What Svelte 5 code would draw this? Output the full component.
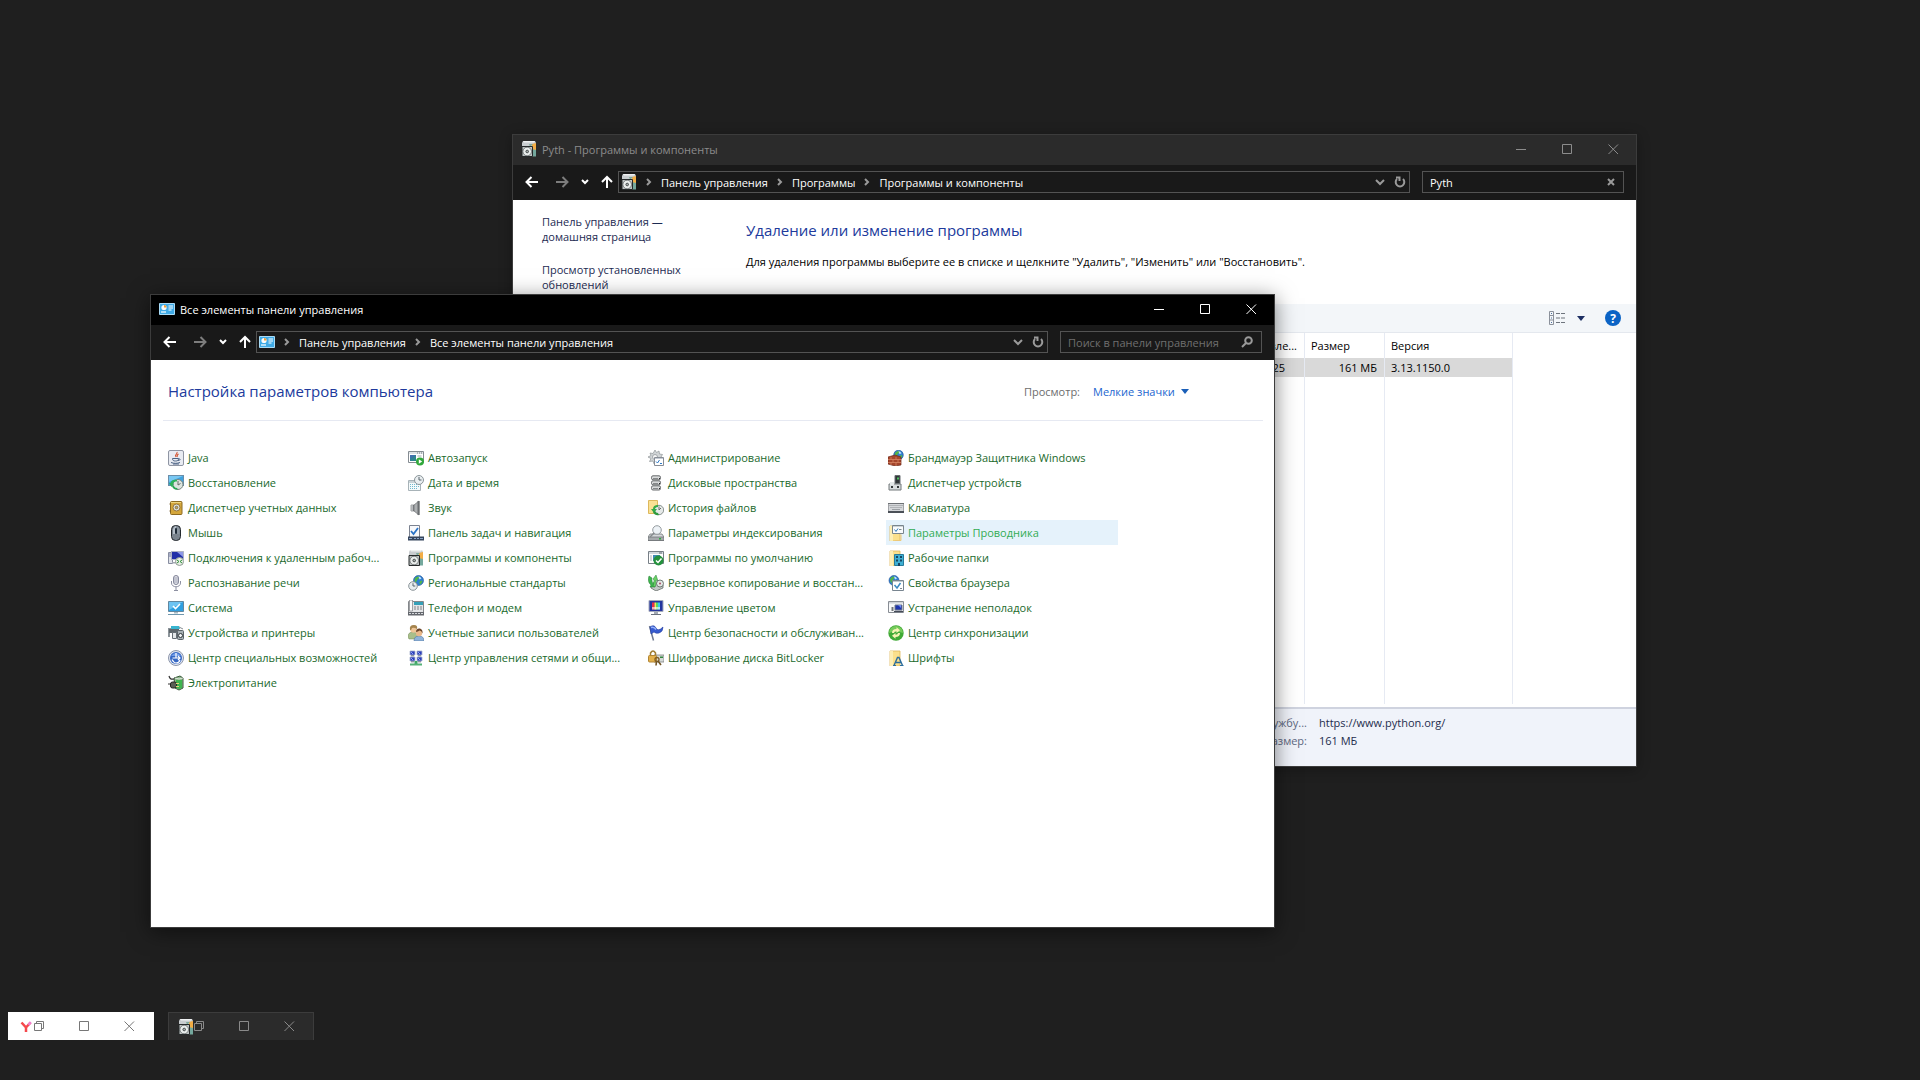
<script lang="ts">
  interface PanelItem {
    label: string;
    icon: string;
    active?: boolean;
  }

  const globe = (x: number, y: number, r: number) => `
    <circle cx="${x}" cy="${y}" r="${r}" fill="#2f7fd0" stroke="#1d4f94" stroke-width=".6"/>
    <path d="M${x - r + 1} ${y - 1}q1-3 4-3l1 1-2 2-1 2-1 2zM${x + 1} ${y + 1}l2-1 1 1-2 3-1-1z" fill="#53b548"/>
    <path d="M${x} ${y - r + 1}q2 0 3 2l-2 1z" fill="#bfe3ff"/>`;

  const clock = (x: number, y: number, r: number) => `
    <circle cx="${x}" cy="${y}" r="${r}" fill="#e9eef0" stroke="#8b9499"/>
    <path d="M${x} ${y - r + 1.5}v${r - 1.5}h${r - 2}" fill="none" stroke="#59646c"/>`;

  const folder = `
    <path d="M2 1h10v15H2z" fill="#fbe08c" stroke="#dfb75b" stroke-width=".8"/>
    <path d="M2 1h3v15H2z" fill="#fdeeb5"/>`;

  const icons: Record<string, string> = {
    java: `<rect x=".5" y=".5" width="15" height="15" rx="1.5" fill="#e8ebf2" stroke="#8f95a3"/>
      <path d="M9 2c1 2-3 2.500-1 5M10.500 4c-2 1-1 2-1.500 3" fill="none" stroke="#d4502d" stroke-width="1.1"/>
      <path d="M4.500 8.500h6c0 2-1 2.500-3 2.500s-3-.5-3-2.500zM10.500 9c2.500-.5 2 1.500-.5 1.500M3 12.500c3 1.200 6.500 1 9 0M5 14h6" fill="none" stroke="#4c6384"/>`,
    recovery: `<rect x=".5" y=".5" width="15" height="10" fill="#3fa2df" stroke="#6b8ea9"/>
      <path d="M1 1h14L1 7z" fill="#79c8f3"/><circle cx="10" cy="9.500" r="5" fill="#dce4de" stroke="#7a857e"/>
      <path d="M10 6v4l2.500-1.500" stroke="#626c66" fill="none"/><path d="M9 5C5 4 3 6 2.500 8L1 8l2.500 4L6 9H5c.5-2 2-2.500 4-2.500z" fill="#2eb35a"/>
      <path d="M4 11c1 3 3 4 6 3.500L9 13c-2 0-2.500-1-3-2z" fill="#27a852"/>`,
    vault: `<rect x="2.500" y="1.500" width="11.500" height="13" rx="1" fill="#d5a73c" stroke="#8d6a22"/>
      <path d="M3 2h10v1H3z" fill="#efd580"/><circle cx="8.500" cy="7.500" r="3.500" fill="#dfe2de" stroke="#947640"/>
      <circle cx="8.500" cy="7.500" r="1.300" fill="#c9a85a" stroke="#64553a" stroke-width=".7"/><path d="M1.500 4h1M1.500 11h1" stroke="#6d5220"/>`,
    mouse: `<rect x="3.500" y=".5" width="9" height="15" rx="4" fill="#79838d" stroke="#23282d"/>
      <path d="M5 4q1-3 3-3v8H5z" fill="#b5bec8"/><path d="M8.500 1q3 1 3 4v4h-3z" fill="#8a95a0"/><rect x="7" y="3" width="2" height="6" rx="1" fill="#1d2a36"/>`,
    remote: `<path d="M.5 2.500h4v11h-4z" fill="#dfe2e8" stroke="#878da0"/><path d="M1 4h3M1 6h3" stroke="#7179a5"/>
      <path d="M3.500 1.500h12v8h-12z" fill="#2230a8" stroke="#aeb3c4"/><path d="M9 2h6v5z" fill="#8e98e6"/>
      <path d="M4 12h6v1.500H4z" fill="#a5a9b4"/><circle cx="11.500" cy="11.500" r="4" fill="#e8efe5" stroke="#8f9a92"/>
      <path d="M9 10l2 1.500L9 13M14 10l-2 1.500L14 13" fill="none" stroke="#31913c"/>`,
    mic: `<rect x="5.500" y=".5" width="5" height="9" rx="2.500" fill="#e7e8ee" stroke="#7f8296"/>
      <path d="M5.500 3h5M5.500 5h5M5.500 7h5" stroke="#9fa2b3"/><path d="M3.500 6v2c0 5 9 5 9 0V6M8 12v3M6 15.500h4" fill="none" stroke="#8d90a2"/>`,
    system: `<path d="M.5 1.500h15v10H.5z" fill="#2f9fe0" stroke="#62879f"/><path d="M1 2h14L1 10z" fill="#6cc3f2"/>
      <path d="M5 6l2.500 2.500L12 4" fill="none" stroke="#fff" stroke-width="1.600"/><path d="M6 12h4v1.500H6z" fill="#a8bac4"/><path d="M0 14.500h16" stroke="#6f97ae"/>`,
    devices: `<path d="M0 3h8v1H2v8H0z" fill="#8c949a"/><path d="M3 1h8l1 3H3z" fill="#38b5d0"/><path d="M1 4h10v4H1z" fill="#5f676c"/>
      <path d="M4.500 7.500h4v6h-4z" fill="#e4e7e9" stroke="#666e74"/><rect x="9.500" y="5.500" width="6" height="9" rx="1" fill="#a7afb4" stroke="#5b6368"/>
      <circle cx="12.500" cy="10.500" r="2" fill="#f1f4f6" stroke="#33393d"/><path d="M11 2l4 2" stroke="#858d92"/>`,
    access: `<circle cx="8" cy="8" r="7.500" fill="#e1e6f0" stroke="#8d96ab"/><circle cx="8" cy="8" r="6" fill="#3567c4"/>
      <path d="M3 6q5-6 10 0z" fill="#739de7"/><path d="M8 3v5H4.500M8 8h3.500M10 6l2 2-2 2M4 9.500q2 3.500 4 3.500 3 0 4-3" fill="none" stroke="#fff" stroke-width="1.200"/>`,
    power: `<path d="M6 3l6-2 3 2v10l-4 2-4-2z" fill="#8fb98c" stroke="#38563a"/><path d="M8 5h6v8l-3 1-3-1z" fill="#3fb44f"/><path d="M7 3q4 2 8 0" stroke="#dde6dc" fill="none"/>
      <path d="M1 1q1 4 5 3M0 9h3" fill="none" stroke="#333" stroke-width="1.200"/><rect x="2.500" y="7" width="6" height="6" rx="2" fill="#5a5f55" stroke="#23261f"/><path d="M8 8.500h3M8 11.500h3" stroke="#e5d37a" stroke-width="1.200"/>`,
    autoplay: `<path d="M.5 1.500h15v11H.5z" fill="#fff" stroke="#858c92"/><path d="M1 2h14v2H1z" fill="#dfe3e6"/><path d="M9 3h1M11 3h1M13 3h1" stroke="#757d83"/>
      <path d="M2 5h6v6H2z" fill="#2f8490"/><path d="M2 5h6l-6 4z" fill="#3f6fad"/><path d="M9.500 6h4" stroke="#9fa8ae"/><circle cx="12" cy="11.500" r="4" fill="#31a83b"/><path d="M10.800 9.200l3.400 2.300-3.400 2.300z" fill="#fff"/>`,
    date: `<path d="M.5 5.500h12v10H.5z" fill="#f4fafb" stroke="#a8b3b8"/><path d="M1 6h11v2H1z" fill="#c9d3d7"/>
      <path d="M2 9.500h9M2 11.500h9M2 13.500h7" stroke="#72b9ce" stroke-dasharray="1 1"/>${clock(11, 5, 4.5)}`,
    sound: `<path d="M3 5h3v6H3z" fill="#8e9194" stroke="#626568" stroke-width=".6"/><path d="M6 5l5-4v14l-5-4z" fill="#adb0b2" stroke="#696c6f" stroke-width=".7"/><path d="M10.500 1v14" stroke="#6b6e71" stroke-width="2"/><path d="M4 5v6" stroke="#e2e4e5"/>`,
    taskbar: `<path d="M1.500.5h10v13h-10z" fill="#f8f9fb" stroke="#7b8290"/><path d="M3 6l2.500 3L10 3" fill="none" stroke="#2b74c7" stroke-width="1.800"/>
      <path d="M0 11.500h16v4H0z" fill="#35455d"/><path d="M1 13.500h3M6 13.500h2M9 13.500h2M12 13.500h3" stroke="#8aa3c6"/>`,
    programs: `<path d="M2 0h12l1 2v3H1V2z" fill="#c9cdd0"/><path d="M2 0h12l-1 1.500H3z" fill="#eff1f2"/><path d="M8 3h7v10H8z" fill="#d3d8d8"/>
      <path d="M11 3l4-1v7l-4 1z" fill="#f3ad45"/><path d="M8 3h4l-3 3z" fill="#7fa99c"/><path d="M11 8l4 1v6.500h-4z" fill="#74a89d"/>
      <path d="M1 5.500h10.500v10H1z" fill="#bfc4c4" stroke="#262a2b"/><circle cx="6.200" cy="10.500" r="4.300" fill="#e9edec" stroke="#3c4243" stroke-width=".6"/><circle cx="6.200" cy="10.500" r="1.300" fill="#aab1b0" stroke="#2d3233" stroke-width=".8"/>`,
    region: `${globe(10.5, 5.5, 5)}${clock(5, 11, 4.3)}`,
    phone: `<path d="M.5 1.500h15v13H.5z" fill="#e4e5e7" stroke="#84878b"/><path d="M1.500 0h3v11h-3z" fill="#fbfbfb" stroke="#8b8e92" stroke-width=".8"/>
      <path d="M6 2h9v3H6z" fill="#34a0b8"/><path d="M6 7h9M6 9h9" stroke="#808489" stroke-dasharray="2 1"/><path d="M0 12h16v3.500H0z" fill="#64676d"/><path d="M1 13.500h14" stroke="#d6d8dc" stroke-dasharray="2 1"/>`,
    users: `<path d="M0 12q0-5 5-5 4 0 5 5v2H1z" fill="#a9bf8b" stroke="#6d8750" stroke-width=".5"/><circle cx="5.500" cy="4.500" r="3.200" fill="#f0c698"/><path d="M2 5q-1-5 4-5 4 0 3 4-3-2-5-1-1 3-2 2z" fill="#a5844d"/>
      <path d="M6 16q0-5 5-5t5 5z" fill="#8fb3da" stroke="#4b6d94" stroke-width=".5"/><circle cx="11" cy="8" r="3.200" fill="#e9b88b"/><path d="M8 7q0-4 4-3.500 3 1 2.500 5-1-3-3-3-1.500 1-3.500 1.500z" fill="#694429"/>`,
    network: `<g fill="#2a3dbb" stroke="#a9b3cd" stroke-width=".8"><path d="M2 1h5v4H2zM9 1h5v4H9zM2 7h5v4H2zM9 7h5v4H9z"/></g>
      <path d="M3 2l2 2M10 2l2 2M3 8l2 2M10 8l2 2" stroke="#8ea1f4"/><path d="M3 5.800h3M10 5.800h3M3 11.800h3M10 11.800h3" stroke="#6c7487"/><path d="M8 11v3" stroke="#3fa567" stroke-width="3"/><path d="M2 14.500h12" stroke="#54b177" stroke-width="2"/>`,
    admin: `<path d="M7 0l1.500 2.500L11 1l.5 3 3 .5-1.500 2.500 2 1.500-3 1.500-1 3-2.500-1.500L6 14l-1-3-3.500.5L3 8.500 0 7l3-1.500L2 3l3 .5z" fill="#d0d4d6" stroke="#90969a" stroke-width=".7"/><circle cx="7" cy="7" r="2.500" fill="#f6f7f7" stroke="#a2a7aa"/>
      <path d="M6.500 7.500h9v8h-9z" fill="#fff" stroke="#878d96"/><path d="M7 8.500h8" stroke="#c4cad4"/><path d="M8 11.500l1.500 1.500 2-3M12 13.500h2" fill="none" stroke="#2c79c7"/>`,
    storage: `<g fill="#d8dadb" stroke="#686b6d"><rect x="3.500" y=".8" width="9" height="4" rx="1.500"/><rect x="3.500" y="5.800" width="9" height="4" rx="1.500"/><rect x="3.500" y="10.800" width="9" height="4.200" rx="1.500"/></g>
      <path d="M5 3.500h5M5 8.500h5M5 13.500h5" stroke="#858889"/><path d="M11 3.500h1M11 8.500h1M11 13.500h1" stroke="#242627"/>`,
    history: `<path d="M.5.5h9v13h-9z" fill="#fae194" stroke="#ddb85c"/><circle cx="11" cy="10" r="4.700" fill="#e5e9e8" stroke="#87908d"/><path d="M11 6.500V10l2-2" fill="none" stroke="#66706c"/>
      <path d="M10 5Q5 5 5 9H3l3 4 3-4H7q0-2 3-2z" fill="#35ab48"/><path d="M5 12q2 4 6 3l-1-2q-2 0-3-2z" fill="#2f9b40"/>`,
    indexing: `<path d="M2 9h12l2 3v3.500H0V12z" fill="#d5d8da" stroke="#75797c" stroke-width=".8"/><path d="M0 12h16v3.500H0z" fill="#a6aaad" stroke="#696d70" stroke-width=".7"/><path d="M11 13h2v1.500h-2z" fill="#2fac41"/>
      <circle cx="9" cy="5" r="4.300" fill="#edf2f6" stroke="#969ca0"/><path d="M6 8l-4 4" stroke="#84898c" stroke-width="1.500"/>`,
    defaults: `<path d="M.5 1.500h15v12H.5z" fill="#fff" stroke="#777f86"/><path d="M1 2h14v2H1z" fill="#d4dadf"/><path d="M11 3h3" stroke="#687178"/><path d="M5 5h7v6H5z" fill="#3f8bb5"/><path d="M2 6h2M2 8h2M2 10h2" stroke="#aab2b8"/>
      <circle cx="10.500" cy="10.500" r="5" fill="#24913d"/><path d="M8 10.500l2 2 3.500-4" fill="none" stroke="#fff" stroke-width="1.500"/>`,
    backup: `<path d="M3 11l5-3 7 2v3l-7 3-5-3z" fill="#c3c8c5" stroke="#555b59" stroke-width=".7"/><path d="M1 1q-2 6 2 9l-1 2h5l-1-5-1 2Q3.500 6 4 3z" fill="#3eb54e" stroke="#247a31" stroke-width=".5"/>
      <path d="M7 12q2-4 1-7l2 1-2-6-3 4 1 1q0 4-1 6z" fill="#6bd065" stroke="#28843a" stroke-width=".5"/><circle cx="12" cy="8.500" r="3.500" fill="#e1e6e3" stroke="#555e5a" stroke-width=".8"/><circle cx="12" cy="8.500" r="1" fill="#ad4b64"/>`,
    color: `<path d="M1 .5h14v11H1z" fill="#24359e" stroke="#a4aabc"/><path d="M4 2.500h2.500v7H4z" fill="#ea2c48"/><path d="M6.500 2.500H8v7H6.500z" fill="#ffe44f"/><path d="M8 2.500h2v7H8z" fill="#57dd61"/><path d="M10 2.500h2v7h-2z" fill="#38c7f0"/>
      <path d="M4 7h8v2.500H4z" fill="#fff" opacity=".6"/><path d="M6 12h4v2H6z" fill="#a5abb4"/><path d="M3 14.500h10" stroke="#6b727e"/>`,
    flag: `<path d="M1.500 1l4 14.500" stroke="#6e7891" stroke-width="1.500"/><path d="M2 2q4-3 6 1t7-1q0 5-4 6-3 1-5-1l-3 2z" fill="#375bd0" stroke="#233e9e" stroke-width=".6"/><path d="M3 2.500q3-1 5 2" stroke="#95b2fb" fill="none" stroke-width="1.400"/>`,
    bitlocker: `<path d="M6 5h10v7H6z" fill="#d5d9d7" stroke="#7d8280" stroke-width=".8"/><path d="M12 6.500h3v1.500h-3z" fill="#31863e"/><path d="M2.500 6V3Q5-1 7.500 3v3" fill="none" stroke="#a17d33" stroke-width="1.500"/><rect x=".5" y="5.500" width="8" height="6.500" rx="1" fill="#e3b04a" stroke="#b08534"/>
      <circle cx="9" cy="9.500" r="2" fill="none" stroke="#805d23" stroke-width="1.300"/><path d="M10 11l3 4M8.500 11.500L8 15.500" stroke="#725526" stroke-width="1.600"/>`,
    firewall: `${globe(10.5, 5, 4.8)}<path d="M0 7l7-2 6 2v8l-6 1-7-2z" fill="#a5452c" stroke="#6d2a1b" stroke-width=".7"/><path d="M0 9.500h13M0 12.500h13M3 7v2.500M8 7v2.500M5 9.500v3M10 9.500v3M3 12.500v2.500M8 12.500V16" stroke="#dd8d6b" stroke-width=".7"/>`,
    hardware: `<path d="M7 .5h5v8H7z" fill="#303538" stroke="#676d70"/><path d="M9 2.500h2v2H9z" fill="#4fc260"/><path d="M1 9h12v6H1z" fill="#d9dddf" stroke="#72787b"/><path d="M2 7h4v3H2z" fill="#e4e8e9"/><path d="M3 11h2v2H3zM9 11h2v2H9z" fill="#34393b"/>`,
    keyboard: `<path d="M0 3.500h16v8H0z" fill="#d5d7da" stroke="#6e7175"/><path d="M1.500 5.500h13M2.500 7.500h11" stroke="#8a8e93" stroke-dasharray="1 1"/><path d="M4 9.500h8" stroke="#9b9fa3"/><path d="M0 11h16v2H0z" fill="#4b5057"/>`,
    explorer: `${folder}<path d="M4.500.500h11v8h-11z" fill="#f9fbfc" stroke="#79858c"/><path d="M5 1.500h10" stroke="#cbd2d6"/><path d="M6.500 4.500l1.500 2 2-3" fill="none" stroke="#317bbd"/><path d="M11 4.500h2.500" stroke="#7d898f"/><path d="M7 15.500h6v-6" stroke="#edc979" fill="none"/>`,
    work: `${folder}<path d="M6.500 4.500h9v11h-9z" fill="#3eafd3" stroke="#277b9b"/><path d="M8 6h2v2H8zM12 6h2v2h-2zM8 9.500h2v2H8zM12 9.500h2v2h-2zM10 13h2v3h-2z" fill="#154663"/>`,
    internet: `${globe(6, 5.5, 5)}<path d="M4.500 5.500h11v10h-11z" fill="#fff" stroke="#788590"/><path d="M5 6.500h10" stroke="#c0cad1"/><path d="M6.500 10l2.500 3L12.500 8" fill="none" stroke="#3c8ac2" stroke-width="1.500"/><path d="M12 13.500h2" stroke="#7e8990"/>`,
    trouble: `<path d="M.5 1.500h15v11H.5z" fill="#f8f9fa" stroke="#888d94"/><path d="M1 2h14v1.500H1z" fill="#cfd3d8"/><path d="M7 5h7v5H7z" fill="#1d34ac" stroke="#6f788c"/><path d="M10 5l3 3V5z" fill="#6f8af3"/><path d="M3.500 7h2v4h-2z" fill="#70747a"/><path d="M6 11.500h9" stroke="#454b58" stroke-width="1.300"/>`,
    sync: `<circle cx="8" cy="8" r="7.700" fill="#41aa36"/><path d="M1 8a7 7 0 0114 0q-7-3-14 0z" fill="#75ca5b"/><path d="M4 8q0-4 4.500-4V2.200L12 5.200 8.500 8V6.300Q6 6.300 6 8zM12 8q0 4-4.500 4v1.800L4 10.800 7.500 8v1.700Q10 9.700 10 8z" fill="#f7f3b4"/>`,
    fonts: `${folder}<path d="M6 15.500l3.500-8h1.500l3.500 8M8 12.500h5" fill="none" stroke="#2c6d9c" stroke-width="1.400"/><path d="M5 15.500h3M12 15.500h3.500" stroke="#2c6d9c"/>`,
    panel: `<path d="M.5 2.500h15v11H.5z" fill="#3faae6" stroke="#a9dbf6"/><circle cx="5" cy="6.500" r="2.600" fill="#f8fbfd"/><path d="M5 6.500V3.900a2.600 2.600 0 012.600 2.600z" fill="#efa037"/><path d="M9.500 5h4.500M9.500 7h4.500M9.500 9h3" stroke="#fff"/><path d="M2 11h5" stroke="#d8effb" stroke-width="1.500"/>`,
    yandex: `<path d="M3.500 3.500L8 8.500V13M12.500 3.500L8 8.500" fill="none" stroke="#f5484c" stroke-width="2.500"/><path d="M12.800 3.200L10.500 5.800" stroke="#ef7fd0" stroke-width="2.500"/>`
  };

  const items: PanelItem[] = [
    { label: "Java", icon: "java" },
    { label: "Автозапуск", icon: "autoplay" },
    { label: "Администрирование", icon: "admin" },
    { label: "Брандмауэр Защитника Windows", icon: "firewall" },
    { label: "Восстановление", icon: "recovery" },
    { label: "Дата и время", icon: "date" },
    { label: "Дисковые пространства", icon: "storage" },
    { label: "Диспетчер устройств", icon: "hardware" },
    { label: "Диспетчер учетных данных", icon: "vault" },
    { label: "Звук", icon: "sound" },
    { label: "История файлов", icon: "history" },
    { label: "Клавиатура", icon: "keyboard" },
    { label: "Мышь", icon: "mouse" },
    { label: "Панель задач и навигация", icon: "taskbar" },
    { label: "Параметры индексирования", icon: "indexing" },
    { label: "Параметры Проводника", icon: "explorer", active: true },
    { label: "Подключения к удаленным рабоч...", icon: "remote" },
    { label: "Программы и компоненты", icon: "programs" },
    { label: "Программы по умолчанию", icon: "defaults" },
    { label: "Рабочие папки", icon: "work" },
    { label: "Распознавание речи", icon: "mic" },
    { label: "Региональные стандарты", icon: "region" },
    { label: "Резервное копирование и восстан...", icon: "backup" },
    { label: "Свойства браузера", icon: "internet" },
    { label: "Система", icon: "system" },
    { label: "Телефон и модем", icon: "phone" },
    { label: "Управление цветом", icon: "color" },
    { label: "Устранение неполадок", icon: "trouble" },
    { label: "Устройства и принтеры", icon: "devices" },
    { label: "Учетные записи пользователей", icon: "users" },
    { label: "Центр безопасности и обслуживан...", icon: "flag" },
    { label: "Центр синхронизации", icon: "sync" },
    { label: "Центр специальных возможностей", icon: "access" },
    { label: "Центр управления сетями и общи...", icon: "network" },
    { label: "Шифрование диска BitLocker", icon: "bitlocker" },
    { label: "Шрифты", icon: "fonts" },
    { label: "Электропитание", icon: "power" }
  ];

  let query = $state("Pyth");
  let panelQuery = $state("");
</script>

{#snippet icon(name: string)}
  <svg class="icon" width="16" height="16" viewBox="0 0 16 16" aria-hidden="true">{@html icons[name]}</svg>
{/snippet}

{#snippet glyph(d: string)}
  <svg class="glyph" width="11" height="11" viewBox="0 0 11 11" aria-hidden="true"><path {d} /></svg>
{/snippet}

{#snippet titlebar(name: string, title: string)}
  <header class="titlebar">
    {@render icon(name)}
    <h1>{title}</h1>
    <button type="button" aria-label="Свернуть">{@render glyph("M0 5.500h10")}</button>
    <button type="button" aria-label="Развернуть">{@render glyph("M.5 .5h9v9h-9z")}</button>
    <button type="button" aria-label="Закрыть">{@render glyph("M.5 .5l9.500 9.500M10 .5L.5 10")}</button>
  </header>
{/snippet}

{#snippet address(name: string, crumbs: string[])}
  <div class="history">
    <button type="button" aria-label="Назад">
      <svg width="14" height="12" viewBox="0 0 14 12"><path d="M13 6H2M6.500 1L1.500 6l5 5" /></svg>
    </button>
    <button type="button" class="dim" aria-label="Вперед">
      <svg width="14" height="12" viewBox="0 0 14 12"><path d="M1 6h11M7.500 1l5 5-5 5" /></svg>
    </button>
    <button type="button" aria-label="Последние расположения">
      <svg width="8" height="6" viewBox="0 0 8 6"><path d="M1 1l3 3 3-3" /></svg>
    </button>
    <button type="button" aria-label="Вверх">
      <svg width="12" height="14" viewBox="0 0 12 14"><path d="M6 13V2M1 7l5-5 5 5" /></svg>
    </button>
  </div>
  <nav class="address" aria-label="Адрес">
    {@render icon(name)}
    {#each crumbs as crumb}
      <svg class="sep" width="6" height="8" viewBox="0 0 6 8" aria-hidden="true"><path d="M1 1l3 3-3 3" /></svg>
      <a href="#top">{crumb}</a>
    {/each}
    <span class="fill"></span>
    <button type="button" aria-label="Показать список">
      <svg width="10" height="7" viewBox="0 0 10 7"><path d="M1 1l4 4 4-4" /></svg>
    </button>
    <button type="button" aria-label="Обновить">
      <svg width="12" height="12" viewBox="0 0 12 12"><path d="M3 3a4.300 4.300 0 106 0M2 1.500h3.500V5" /></svg>
    </button>
  </nav>
{/snippet}

{#snippet stub(name: string, light: boolean)}
  <div class="stub" class:light>
    {@render icon(name)}
    <button type="button" aria-label="Восстановить">{@render glyph("M.5 2.500h7v7h-7zM2.500 2.500v-2h7v7h-2")}</button>
    <button type="button" aria-label="Развернуть">{@render glyph("M.5 .5h9v9h-9z")}</button>
    <button type="button" aria-label="Закрыть">{@render glyph("M.5 .5l9.500 9.500M10 .5L.5 10")}</button>
  </div>
{/snippet}

<main id="top" class="desktop">
  <section class="window programs" aria-label="Программы и компоненты">
    {@render titlebar("programs", "Pyth - Программы и компоненты")}
    <div class="navbar">
      {@render address("programs", ["Панель управления", "Программы", "Программы и компоненты"])}
      <div class="search">
        <input type="text" aria-label="Поиск" bind:value={query} />
        <button type="button" aria-label="Очистить" onclick={() => (query = "")}>
          <svg width="8" height="8" viewBox="0 0 8 8"><path d="M1 1l6 6M7 1L1 7" /></svg>
        </button>
      </div>
    </div>

    <div class="programs-body">
      <aside>
        <a href="#top">Панель управления —<br />домашняя страница</a>
        <a href="#top">Просмотр установленных<br />обновлений</a>
      </aside>
      <div class="programs-main">
        <h2>Удаление или изменение программы</h2>
        <p>Для удаления программы выберите ее в списке и щелкните "Удалить", "Изменить" или "Восстановить".</p>
        <div class="toolbar">
          <button type="button" aria-label="Представление">
            <svg width="16" height="14" viewBox="0 0 16 14">
              <path d="M.5 .5h4v13h-4zM.5 4.500h4M.5 9h4" fill="none" stroke="#8b919b" />
              <path d="M2 2.500h1M2 7h1M2 11.500h1" stroke="#4e6f9b" />
              <path d="M7 2.500h9M7 7h9M7 11.500h9" stroke="#6e747d" stroke-dasharray="4 1" />
            </svg>
          </button>
          <button type="button" aria-label="Другие варианты">
            <svg width="8" height="5" viewBox="0 0 8 5"><path d="M0 0h8L4 5z" fill="#1d2f63" /></svg>
          </button>
          <button type="button" class="help" aria-label="Справка">?</button>
        </div>
        <table>
          <colgroup>
            <col />
            <col class="size" />
            <col class="version" />
          </colgroup>
          <thead>
            <tr><th class="date">Установле...</th><th>Размер</th><th>Версия</th></tr>
          </thead>
          <tbody>
            <tr class="selected"><td class="date">2025</td><td class="number">161 МБ</td><td>3.13.1150.0</td></tr>
            <tr><td></td><td></td><td></td></tr>
          </tbody>
        </table>
      </div>
    </div>

    <dl class="details">
      <dt>службу...</dt>
      <dd>https://www.python.org/</dd>
      <dt>Размер:</dt>
      <dd>161 МБ</dd>
    </dl>
  </section>

  <section class="window panel" aria-label="Все элементы панели управления">
    {@render titlebar("panel", "Все элементы панели управления")}
    <div class="navbar">
      {@render address("panel", ["Панель управления", "Все элементы панели управления"])}
      <div class="search">
        <input type="text" aria-label="Поиск" placeholder="Поиск в панели управления" bind:value={panelQuery} />
        <button type="button" aria-label="Найти">
          <svg width="12" height="12" viewBox="0 0 12 12"><circle cx="7.500" cy="4.500" r="3.300" /><path d="M5 7l-4 4" /></svg>
        </button>
      </div>
    </div>

    <div class="panel-body">
      <div class="panel-head">
        <h2>Настройка параметров компьютера</h2>
        <label for="view">Просмотр:</label>
        <select id="view">
          <option>Мелкие значки</option>
        </select>
        <svg width="8" height="5" viewBox="0 0 8 5" aria-hidden="true"><path d="M0 0h8L4 5z" fill="#1a5fb8" /></svg>
      </div>
      <ul>
        {#each items as item}
          <li>
            <a href="#top" class:active={item.active}>
              {@render icon(item.icon)}
              <span>{item.label}</span>
            </a>
          </li>
        {/each}
      </ul>
    </div>
  </section>

  <div class="minimized">
    {@render stub("yandex", true)}
    {@render stub("programs", false)}
  </div>
</main>

<style>
  :global(body) {
    background: #1f1f1f;
  }

  .desktop {
    position: relative;
    min-height: 100vh;
    overflow: hidden;
    background: #1f1f1f;
    color: #000;
    font: 11px/15px "Open Sans", "Noto Sans", sans-serif;
  }

  .desktop * {
    box-sizing: border-box;
  }

  button {
    display: flex;
    align-items: center;
    justify-content: center;
    border: 0;
    background: none;
    padding: 0;
    color: inherit;
    font: inherit;
  }

  a {
    color: inherit;
    text-decoration: none;
  }

  h1,
  h2,
  p,
  ul,
  dl,
  dd {
    margin: 0;
    padding: 0;
    font-weight: 400;
  }

  h1 {
    flex: 1;
    font-size: 11px;
  }

  h2 {
    color: #203a9c;
    font-size: 15px;
    line-height: 20px;
  }

  .icon,
  .glyph {
    flex: none;
  }

  .glyph {
    fill: none;
    stroke: currentColor;
  }

  /* windows */
  .window {
    position: absolute;
    display: flex;
    flex-direction: column;
    border: 1px solid #3c3c3c;
    background: #fff;
  }

  .programs {
    top: 134px;
    right: 283px;
    bottom: 313px;
    left: 512px;
    box-shadow: 0 2px 12px rgba(0, 0, 0, 0.3);
  }

  .panel {
    top: 294px;
    right: 645px;
    bottom: 152px;
    left: 150px;
    box-shadow: 0 4px 20px rgba(0, 0, 0, 0.5);
  }

  .titlebar {
    display: flex;
    align-items: center;
    gap: 5px;
    height: 30px;
    padding: 0 2px 2px 8px;
    background: #2b2b2b;
    color: #8c8c8c;
  }

  .panel .titlebar {
    background: #000;
    color: #fff;
  }

  .titlebar button {
    width: 41px;
    height: 28px;
  }

  .navbar {
    display: flex;
    align-items: center;
    height: 35px;
    padding: 0 12px 1px;
    background: #191919;
    color: #fff;
  }

  .navbar svg:not(.icon) {
    fill: none;
    stroke: currentColor;
    stroke-width: 2;
  }

  .history {
    display: flex;
    align-items: center;
    gap: 12px;
    margin-right: 5px;
  }

  .history .dim {
    margin-left: 4px;
    color: #7d7d7d;
  }

  .address,
  .search {
    display: flex;
    align-items: center;
    height: 22px;
    border: 1px solid #535353;
  }

  .address {
    flex: 1;
    gap: 9px;
    margin-right: 12px;
    padding: 0 3px 0 2px;
  }

  .address .fill {
    flex: 1;
  }

  .address .sep,
  .address button,
  .search button {
    color: #9a9a9a;
  }

  .search {
    width: 202px;
    padding: 0 8px 0 7px;
  }

  .search input {
    flex: 1;
    min-width: 0;
    border: 0;
    outline: 0;
    background: none;
    padding: 0;
    color: #fff;
    font: inherit;
  }

  .search input::placeholder {
    color: #6f6f6f;
    opacity: 1;
  }

  /* programs and components */
  .programs-body {
    display: flex;
    flex: 1;
  }

  aside {
    display: flex;
    flex-direction: column;
    gap: 18px;
    width: 222px;
    padding: 14px 0 0 29px;
    color: #1d2b52;
  }

  .programs-main {
    display: flex;
    flex: 1;
    flex-direction: column;
  }

  .programs-main h2 {
    margin: 20px 0 14px 11px;
  }

  .programs-main p {
    margin-left: 11px;
  }

  .toolbar {
    display: flex;
    align-items: center;
    justify-content: flex-end;
    gap: 12px;
    height: 29px;
    margin-top: 35px;
    border-bottom: 1px solid #e4e8ee;
    background: #f3f6f9;
    padding-right: 15px;
  }

  .help {
    width: 16px;
    height: 16px;
    margin-left: 8px;
    border-radius: 50%;
    background: #0b63c5;
    color: #fff;
    font-size: 12px;
    font-weight: 700;
  }

  table {
    width: 778px;
    height: 371px;
    border-collapse: collapse;
    table-layout: fixed;
  }

  .size {
    width: 80px;
  }

  .version {
    width: 128px;
  }

  th,
  td {
    border-right: 1px solid #e6eaf3;
    padding: 0 7px 0 6px;
    font-weight: 400;
    text-align: left;
  }

  th {
    height: 25px;
  }

  .selected td {
    height: 19px;
    background: #d9d9d9;
  }

  .date,
  .number {
    text-align: right;
  }

  td.date {
    padding-right: 19px;
  }

  .details {
    display: grid;
    grid-template-columns: 794px 1fr;
    column-gap: 12px;
    align-content: start;
    grid-auto-rows: 18px;
    height: 59px;
    border-top: 2px solid #cfd3df;
    background: #f0f3fa;
    padding-top: 5px;
    line-height: 18px;
  }

  dt {
    color: #5d6881;
    text-align: right;
  }

  dd {
    color: #1e2d4d;
  }

  /* control panel */
  .panel-body {
    padding: 0 11px 0 12px;
  }

  .panel-head {
    display: flex;
    align-items: center;
    height: 61px;
    border-bottom: 1px solid #e6e9f2;
    padding: 2px 74px 0 5px;
  }

  .panel-head h2 {
    flex: 1;
  }

  label {
    margin-right: 13px;
    color: #6d6d6d;
  }

  select {
    appearance: none;
    margin-right: 6px;
    border: 0;
    outline: 0;
    background: none;
    padding: 0;
    color: #1a66cf;
    font: inherit;
  }

  ul {
    display: grid;
    grid-template-columns: repeat(auto-fill, 240px);
    padding: 24px 0 0 3px;
    list-style: none;
  }

  li a {
    display: flex;
    align-items: center;
    gap: 4px;
    width: 232px;
    height: 25px;
    padding-left: 2px;
    color: #216a2c;
    white-space: nowrap;
  }

  li a.active {
    background: #e5f2fb;
    color: #32ac54;
  }

  /* minimized windows */
  .minimized {
    position: absolute;
    bottom: 40px;
    left: 8px;
    display: flex;
    gap: 14px;
  }

  .stub {
    display: flex;
    align-items: center;
    height: 28px;
    border: 1px solid #3c3c3c;
    border-bottom: 0;
    background: #2b2b2b;
    padding: 0 18px 0 9px;
    color: #8a8a8a;
  }

  .stub button + button {
    margin-left: 34px;
  }

  .light {
    border-color: #fff;
    background: #fff;
    color: #777;
  }
</style>
